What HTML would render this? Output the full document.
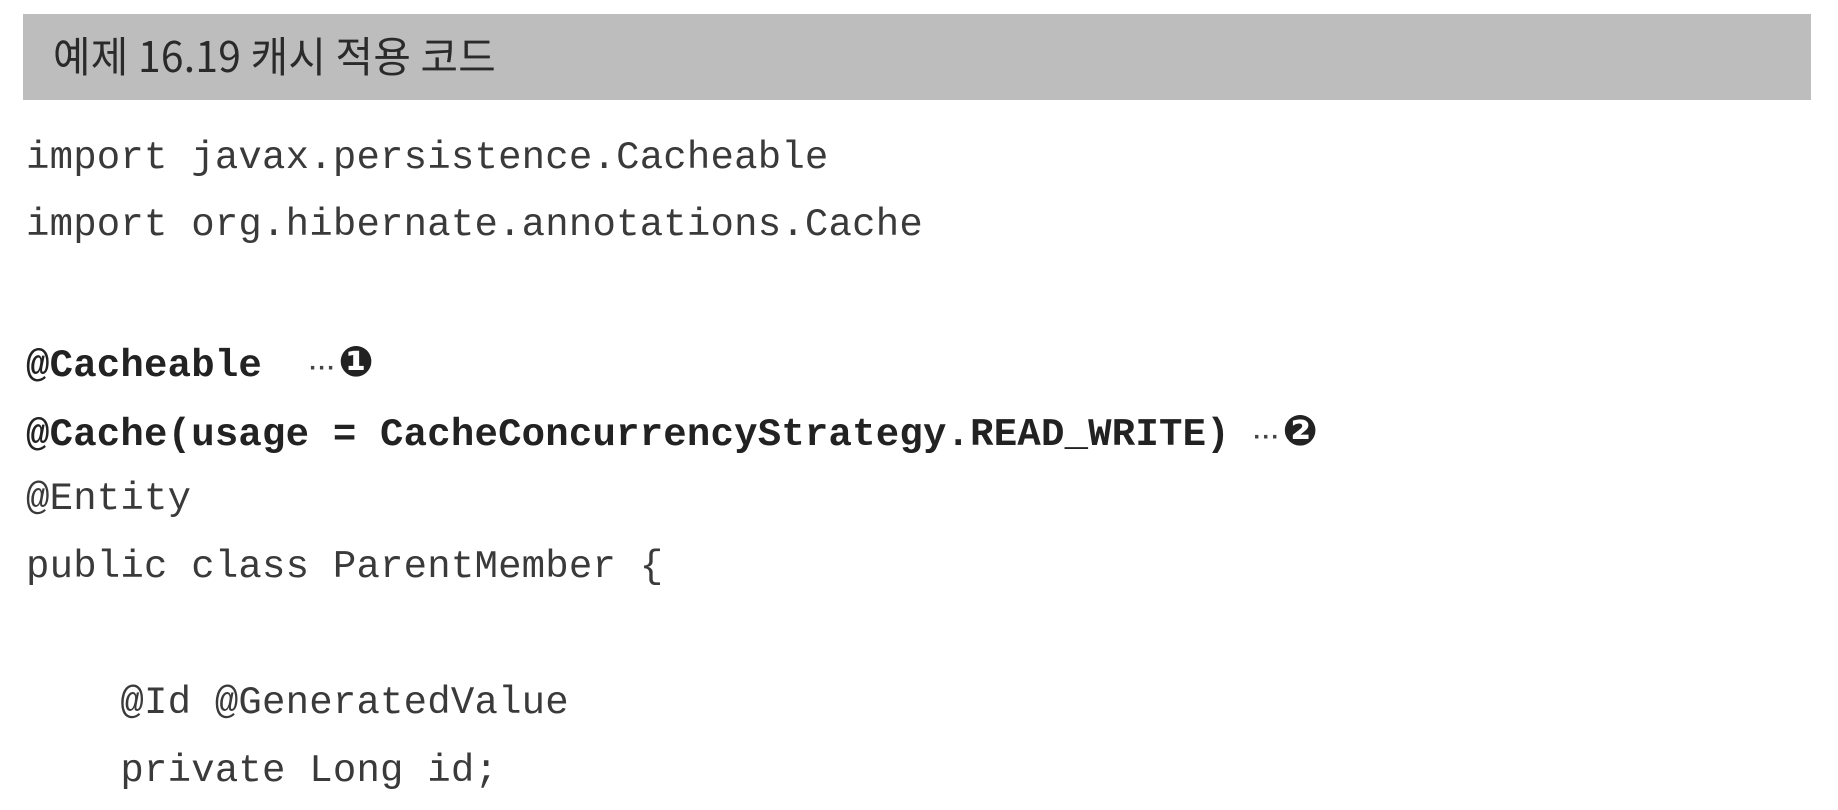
<!DOCTYPE html>
<html><head><meta charset="utf-8"><style>
body{margin:0;width:1838px;height:810px;background:#fff;overflow:hidden;position:relative;}
.bar{position:absolute;left:23px;top:14px;width:1788px;height:86px;background:#bdbdbd;}
.title{position:absolute;left:53px;top:25px;font-family:"Noto Sans CJK KR","Liberation Sans",sans-serif;font-size:42px;color:#2a2a2a;transform:scaleX(0.97);transform-origin:left;line-height:60px;letter-spacing:0.3px;}
.l{position:absolute;left:26px;font-family:"Liberation Mono",monospace;font-size:39px;color:#3a3a3a;white-space:pre;line-height:50px;letter-spacing:0.2px;}
.b{font-weight:bold;color:#222;}
.c{font-family:"DejaVu Sans",sans-serif;font-size:42px;color:#222;margin-left:2px;}
.d{font-family:"Liberation Sans",sans-serif;font-size:24px;color:#444;letter-spacing:1px;}
</style></head><body>
<div class="bar"></div>
<div class="title">예제 16.19 캐시 적용 코드</div>
<div class="l" style="top:133px">import javax.persistence.Cacheable</div>
<div class="l" style="top:200px">import org.hibernate.annotations.Cache</div>
<div class="l b" style="top:337px">@Cacheable  <span class="d">···</span><span class="c">❶</span></div>
<div class="l b" style="top:406px">@Cache(usage = CacheConcurrencyStrategy.READ_WRITE) <span class="d">···</span><span class="c">❷</span></div>
<div class="l" style="top:474px">@Entity</div>
<div class="l" style="top:542px">public class ParentMember {</div>
<div class="l" style="top:678px">    @Id @GeneratedValue</div>
<div class="l" style="top:746px">    private Long id;</div>
</body></html>
